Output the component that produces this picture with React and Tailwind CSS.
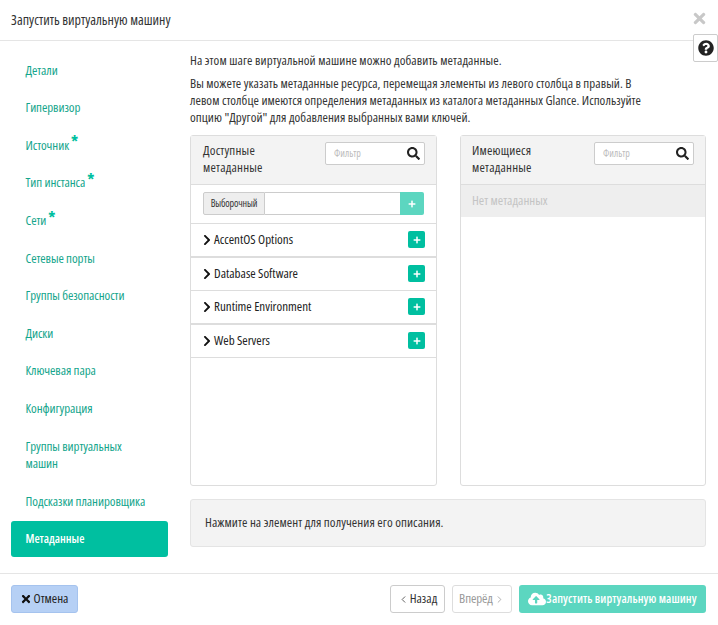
import React from "react";
import { FaSearch, FaPlus, FaTimes, FaQuestionCircle, FaChevronRight, FaCloudUploadAlt } from "react-icons/fa";
import { ChevronLeft, ChevronRight } from "lucide-react";

const nav = [
  ["Детали", 0],
  ["Гипервизор", 0],
  ["Источник", 1],
  ["Тип инстанса", 1],
  ["Сети", 1],
  ["Сетевые порты", 0],
  ["Группы безопасности", 0],
  ["Диски", 0],
  ["Ключевая пара", 0],
  ["Конфигурация", 0],
];

function NavItem({ label, star }) {
  return (
    <div className="h-[37.6px] flex items-center pl-[14.5px] text-[#14a58c] text-[13px] tracking-[-0.08px]">
      <span>{label}</span>
      {star ? <span className="text-[#00bfa0] text-[16px] font-bold ml-[2px] -mt-[8px] leading-none">*</span> : null}
    </div>
  );
}

function Filter() {
  return (
    <div className="w-[100px] h-[23px] border border-[#ccc] rounded-[2px] bg-white flex items-center justify-between pl-[8px] pr-[4px]">
      <span className="text-[10px] text-[#bbb]">Фильтр</span>
      <FaSearch className="text-[#222] text-[13px]" />
    </div>
  );
}

function Row({ label, thick }) {
  return (
    <div className={"h-[33.5px] flex items-center justify-between pl-[10px] pr-[11px] border-b-[#ddd] " + (thick ? "border-b-2" : "border-b")}>
      <div className="flex items-center gap-[1px] text-[13px] text-[#222]">
        <FaChevronRight className="text-[12px] text-[#111]" />
        <span>{label}</span>
      </div>
      <div className="w-[17px] h-[17px] rounded-[2px] bg-[#00bfa0] flex items-center justify-center">
        <FaPlus className="text-white text-[8px]" />
      </div>
    </div>
  );
}

export default function App() {
  return (
    <div className="relative w-[718px] h-[625px] bg-white flex flex-col overflow-hidden font-['Open_Sans',sans-serif] [font-stretch:75%] text-[#222]">
      <header className="h-[41px] shrink-0 border-b border-b-[#e5e5e5] flex items-center pl-[11px] pb-[2px] text-[14px] text-[#333]">
        Запустить виртуальную машину
      </header>
      <FaTimes className="absolute left-[691px] top-[10px] text-[#c8c8c8] text-[17px]" />
      <div className="absolute left-[693px] top-[34px] w-[25px] h-[28px] bg-white border border-[#ccc] rounded-[2px] flex items-center justify-center">
        <FaQuestionCircle className="text-[#222] text-[16px]" />
      </div>

      <main className="flex-1 flex min-h-0">
        <aside className="w-[179px] shrink-0 pl-[11px] pt-[10.5px]">
          <div className="w-[157px]">
            {nav.map(([l, s]) => <NavItem key={l} label={l} star={s} />)}
            <div className="h-[55px] flex items-center pl-[14.5px] pr-[30px] text-[#14a58c] text-[13px] leading-[17px] tracking-[-0.08px]">
              Группы виртуальных машин
            </div>
            <div className="h-[39px] flex items-center pl-[14.5px] text-[#14a58c] text-[13px] whitespace-nowrap tracking-[-0.08px]">Подсказки планировщика</div>
            <div className="h-[36px] flex items-center pl-[14.5px] rounded-[3px] bg-[#00bfa0] text-white text-[12px] font-semibold">Метаданные</div>
          </div>
        </aside>

        <section className="flex-1 pt-[11px] pl-[11px] pr-[12px] min-w-0">
          <p className="text-[13px] leading-[17px] text-[#333] tracking-[0.08px]">На этом шаге виртуальной машине можно добавить метаданные.</p>
          <p className="mt-[6px] text-[13px] leading-[17px] text-[#333] tracking-[0.04px] w-[460px]">
            Вы можете указать метаданные ресурса, перемещая элементы из левого столбца в правый. В левом столбце имеются определения метаданных из каталога метаданных Glance. Используйте опцию "Другой" для добавления выбранных вами ключей.
          </p>

          <div className="mt-[9px] flex justify-between">
            <div className="w-[247px] h-[351px] border border-[#ddd] rounded-[3px] flex flex-col">
              <div className="h-[49px] shrink-0 bg-[#f3f3f3] border-b border-b-[#ddd] flex items-start justify-between pl-[12px] pr-[11px] pt-[6px]">
                <div className="text-[13px] leading-[17px] font-medium text-[#333] tracking-[0.2px]">Доступные<br />метаданные</div>
                <Filter />
              </div>
              <div className="h-[39px] shrink-0 border-b border-b-[#ddd] flex items-start pt-[7px] pl-[12px] pr-[12px]">
                <div className="w-[62px] h-[23px] shrink-0 bg-[#eee] border border-[#ccc] rounded-l-[2px] flex items-center justify-center text-[10px] text-[#333] tracking-[-0.15px]">Выборочный</div>
                <div className="flex-1 h-[23px] bg-white border-y border-y-[#ccc]"></div>
                <div className="w-[24px] h-[23px] bg-[#5cd6c0] rounded-r-[2px] flex items-center justify-center">
                  <FaPlus className="text-white text-[8px]" />
                </div>
              </div>
              <Row label="AccentOS Options" thick />
              <Row label="Database Software" />
              <Row label="Runtime Environment" thick />
              <Row label="Web Servers" />
            </div>

            <div className="w-[246px] h-[351px] border border-[#ddd] rounded-[3px] flex flex-col">
              <div className="h-[49px] shrink-0 bg-[#f3f3f3] border-b border-b-[#ddd] flex items-start justify-between pl-[11px] pr-[11px] pt-[6px]">
                <div className="text-[13px] leading-[17px] font-medium text-[#333] tracking-[0.2px]">Имеющиеся<br />метаданные</div>
                <Filter />
              </div>
              <div className="h-[32px] shrink-0 bg-[#eee] flex items-center pl-[11px] text-[13px] font-medium text-[#c4c4c4]">Нет метаданных</div>
            </div>
          </div>

          <div className="mt-[13px] h-[48px] bg-[#f3f3f3] border border-[#e4e4e4] rounded-[3px] flex items-center pl-[14px] text-[13px] text-[#333] tracking-[0.07px]">
            Нажмите на элемент для получения его описания.
          </div>
        </section>
      </main>

      <footer className="h-[52px] shrink-0 border-t border-t-[#e5e5e5] flex items-start pt-[11px] justify-between pl-[11px] pr-[12px]">
        <button className="w-[67px] h-[28px] bg-[#b6d0f5] border border-[#a5c3ee] rounded-[3px] flex items-center justify-center gap-[2px] pr-[1px] text-[13px] text-[#222]">
          <FaTimes className="text-[12px] text-[#111]" />
          Отмена
        </button>
        <div className="flex items-start gap-[7px]">
          <button className="w-[55px] h-[28px] bg-white border border-[#ccc] rounded-[3px] flex items-center justify-center gap-[1px] text-[13px] text-[#333]">
            <ChevronLeft size={11} strokeWidth={2} className="text-[#555]" />
            Назад
          </button>
          <button className="w-[60px] h-[28px] bg-white border border-[#ddd] rounded-[3px] flex items-center justify-center gap-[1px] text-[13px] text-[#999] tracking-[-0.1px]">
            Вперёд
            <ChevronRight size={11} strokeWidth={2} className="text-[#aaa]" />
          </button>
          <button className="w-[187px] h-[28px] bg-[#5cd6c0] rounded-[3px] flex items-center justify-center gap-[0px] text-[12px] font-semibold text-white whitespace-nowrap tracking-[0.1px]">
            <FaCloudUploadAlt className="text-[18px]" />
            Запустить виртуальную машину
          </button>
        </div>
      </footer>
    </div>
  );
}
